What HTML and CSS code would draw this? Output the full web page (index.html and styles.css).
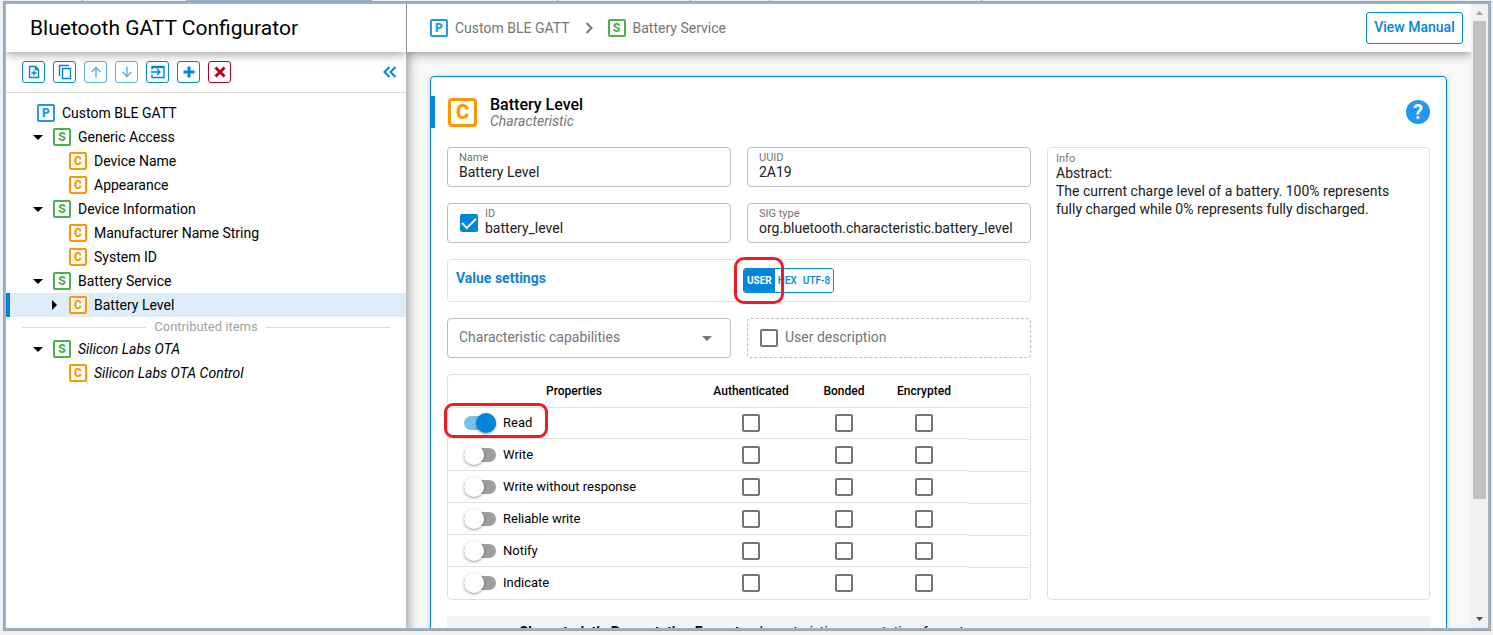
FILE: index.html
```
<!DOCTYPE html>
<html lang="en">
<head>
<meta charset="utf-8">
<title>Bluetooth GATT Configurator</title>
<link rel="stylesheet" href="styles.css">
</head>
<body>
<div class="tabstrip"><span class="tab tab-a"></span><span class="tab tab-b"></span><span class="tab tab-active"></span><span class="tab tab-c"></span><span class="tab tab-d"></span><span class="tab tab-e"></span><span class="tab tab-f"></span><span class="tab tab-rest"></span></div>
<div class="window">
  <aside class="sidebar">
    <header class="bar"><h1 class="app-title">Bluetooth GATT Configurator</h1></header>
    <div class="toolbar">
      <button class="tool" aria-label="Add item"><svg viewBox="0 0 16 16"><path d="M9.500 2.500h-6v11h9v-8zM9.500 2.500v3h3" class="line"/><path d="M8 6.500v5M5.500 9h5" class="line"/></svg></button>
      <button class="tool" aria-label="Duplicate"><svg viewBox="0 0 16 16"><path d="M2.500 12V1.500H12M5.500 4.500h8v10h-8z" class="line"/></svg></button>
      <button class="tool faded" aria-label="Move up"><svg viewBox="0 0 16 16"><path d="M8 13.500v-10M3.500 8L8 3.500 12.500 8" class="line"/></svg></button>
      <button class="tool faded" aria-label="Move down"><svg viewBox="0 0 16 16"><path d="M8 2.500v10M3.500 8L8 12.500 12.500 8" class="line"/></svg></button>
      <button class="tool" aria-label="Import"><svg viewBox="0 0 16 16"><path d="M2 5.500v-3h12v11H2v-3M2 3.500h12M1 8h8.500M7 5l3 3-3 3" class="line"/></svg></button>
      <button class="tool" aria-label="Add"><svg viewBox="0 0 16 16"><path d="M8 2.500v11M2.500 8h11" class="thick"/></svg></button>
      <button class="tool danger" aria-label="Delete"><svg viewBox="0 0 16 16"><path d="M3.500 3.500l9 9M12.500 3.500l-9 9" class="thick"/></svg></button>
      <button class="collapse" aria-label="Collapse panel"><svg viewBox="0 0 14 12"><path d="M6.500 1l-5 5 5 5M12.500 1l-5 5 5 5"/></svg></button>
    </div>
    <ul class="tree">
      <li class="node root"><span class="badge profile">P</span>Custom BLE GATT</li>
      <li class="node service"><span class="caret down"></span><span class="badge serv">S</span>Generic Access</li>
      <li class="node char"><span class="caret"></span><span class="badge chr">C</span>Device Name</li>
      <li class="node char"><span class="caret"></span><span class="badge chr">C</span>Appearance</li>
      <li class="node service"><span class="caret down"></span><span class="badge serv">S</span>Device Information</li>
      <li class="node char"><span class="caret"></span><span class="badge chr">C</span>Manufacturer Name String</li>
      <li class="node char"><span class="caret"></span><span class="badge chr">C</span>System ID</li>
      <li class="node service"><span class="caret down"></span><span class="badge serv">S</span>Battery Service</li>
      <li class="node char selected"><span class="caret right"></span><span class="badge chr">C</span>Battery Level</li>
      <li class="divider">Contributed items</li>
      <li class="node service contributed"><span class="caret down"></span><span class="badge serv">S</span>Silicon Labs OTA</li>
      <li class="node char contributed"><span class="caret"></span><span class="badge chr">C</span>Silicon Labs OTA Control</li>
    </ul>
  </aside>
  <main class="main">
    <header class="bar crumbs">
      <a href="#" class="crumb"><span class="badge profile">P</span>Custom BLE GATT</a>
      <svg class="chevron" viewBox="0 0 8 12"><path d="M1.500 1l5 5-5 5"/></svg>
      <a href="#" class="crumb"><span class="badge serv">S</span>Battery Service</a>
      <button class="manual">View Manual</button>
    </header>
    <div class="content">
      <section class="card">
        <div class="card-head">
          <span class="badge chr large">C</span>
          <div class="heading"><h2>Battery Level</h2><p>Characteristic</p></div>
          <button class="help" aria-label="Help">?</button>
        </div>
        <div class="form">
          <div class="field"><div class="stack"><label for="name">Name</label><input id="name" value="Battery Level"></div></div>
          <div class="field"><div class="stack"><label for="uuid">UUID</label><input id="uuid" value="2A19"></div></div>
          <section class="info"><h3>Info</h3><p>Abstract:<br>The current charge level of a battery. 100% represents fully charged while 0% represents fully discharged.</p></section>
          <div class="field"><input type="checkbox" class="check" aria-label="Use ID" checked><div class="stack"><label for="ident">ID</label><input id="ident" value="battery_level"></div></div>
          <div class="field"><div class="stack"><label for="sig">SIG type</label><input id="sig" value="org.bluetooth.characteristic.battery_level"></div></div>
          <div class="values">
            <h3>Value settings</h3>
            <div class="formats"><div class="segments"><button class="on">USER</button><button>HEX</button><button>UTF-8</button></div><span class="mark mark-user"></span></div>
          </div>
          <div class="field picker"><select aria-label="Characteristic capabilities"><option>Characteristic capabilities</option></select></div>
          <label class="field dashed"><input type="checkbox" class="check">User description</label>
          <div class="props">
            <table>
              <thead><tr><th class="c-prop">Properties</th><th class="c-auth">Authenticated</th><th class="c-bond">Bonded</th><th class="c-enc">Encrypted</th><th></th></tr></thead>
              <tbody>
                <tr><td><label class="toggle"><input type="checkbox" class="switch" checked>Read</label><span class="mark mark-read"></span></td><td><input type="checkbox" class="check" aria-label="Read authenticated"></td><td><input type="checkbox" class="check" aria-label="Read bonded"></td><td class="c-enc"><input type="checkbox" class="check" aria-label="Read encrypted"></td><td></td></tr>
                <tr><td><label class="toggle"><input type="checkbox" class="switch">Write</label></td><td><input type="checkbox" class="check" aria-label="Write authenticated"></td><td><input type="checkbox" class="check" aria-label="Write bonded"></td><td class="c-enc"><input type="checkbox" class="check" aria-label="Write encrypted"></td><td></td></tr>
                <tr><td><label class="toggle"><input type="checkbox" class="switch">Write without response</label></td><td><input type="checkbox" class="check" aria-label="Write without response authenticated"></td><td><input type="checkbox" class="check" aria-label="Write without response bonded"></td><td class="c-enc"><input type="checkbox" class="check" aria-label="Write without response encrypted"></td><td></td></tr>
                <tr><td><label class="toggle"><input type="checkbox" class="switch">Reliable write</label></td><td><input type="checkbox" class="check" aria-label="Reliable write authenticated"></td><td><input type="checkbox" class="check" aria-label="Reliable write bonded"></td><td class="c-enc"><input type="checkbox" class="check" aria-label="Reliable write encrypted"></td><td></td></tr>
                <tr><td><label class="toggle"><input type="checkbox" class="switch">Notify</label></td><td><input type="checkbox" class="check" aria-label="Notify authenticated"></td><td><input type="checkbox" class="check" aria-label="Notify bonded"></td><td class="c-enc"><input type="checkbox" class="check" aria-label="Notify encrypted"></td><td></td></tr>
                <tr><td><label class="toggle"><input type="checkbox" class="switch">Indicate</label></td><td><input type="checkbox" class="check" aria-label="Indicate authenticated"></td><td><input type="checkbox" class="check" aria-label="Indicate bonded"></td><td class="c-enc"><input type="checkbox" class="check" aria-label="Indicate encrypted"></td><td></td></tr>
              </tbody>
            </table>
          </div>
        </div>
        <div class="descriptor"><b>Characteristic Presentation Format</b><i>characteristic_presentation_format</i></div>
      </section>
    </div>
  </main>
  <div class="scrollbar"><svg viewBox="0 0 7 4" class="arrow"><path d="M0 4L3.500 0 7 4z" fill="#a3a3a3"/></svg><div class="track"><div class="thumb"></div></div><svg viewBox="0 0 7 4" class="arrow"><path d="M0 0l3.500 4L7 0z" fill="#505050"/></svg></div>
</div>
</body>
</html>
```
FILE: styles.css
```
* { box-sizing: border-box; }
body {
  margin: 0; height: 100vh; display: flex; flex-direction: column;
  padding: 0 2px 5px 3px; background: #f0f0f0; overflow: hidden;
  font-family: Roboto, sans-serif; font-size: 14px; line-height: 18px; color: #000;
}
h1, h2, h3, p, ul { margin: 0; padding: 0; }
button, input, select { font: inherit; color: inherit; margin: 0; }
button { padding: 0; cursor: pointer; background: #fff; }

.tabstrip { display: flex; height: 2px; flex: none; }
.tab { border-right: 1px solid #a0a0a0; border-bottom: 1px solid #a0a0a0; }
.tab-a { width: 80px; }
.tab-b { width: 104px; }
.tab-active { width: 185px; background: #9db8d9; border-color: #9db8d9; }
.tab-c { width: 186px; }
.tab-d { width: 133px; }
.tab-e { width: 79px; }
.tab-f { width: 212px; }
.tab-rest { flex: 1; border-right: 0; }

.window {
  flex: 1; min-height: 0; display: flex;
  border: 2px solid #99b4d1; box-shadow: 0 0 0 1px #a0a0a0;
  margin: 0 1px; background: #fff; overflow: hidden;
}
.bar {
  flex: none; height: 48px; display: flex; align-items: center; background: #fff;
  box-shadow: 0 2px 10px rgba(0, 0, 0, .4); position: relative; z-index: 2;
}

.sidebar { width: 400px; flex: none; display: flex; flex-direction: column; overflow: hidden; position: relative; z-index: 1; }
.sidebar .bar { padding-left: 24px; }
.app-title { font-size: 21px; line-height: 24px; font-weight: 400; }
.toolbar { height: 41px; flex: none; display: flex; align-items: center; gap: 8px; padding: 0 8px 0 16px; border-bottom: 1px solid #ddd; }
.tool { width: 23px; height: 22px; border: 1px solid #0086d9; border-radius: 3px; color: #0086d9; display: grid; place-items: center; }
.tool svg { width: 16px; height: 16px; }
.line { fill: none; stroke: currentColor; stroke-width: 1.4; }
.thick { fill: none; stroke: currentColor; stroke-width: 3; }
.faded { color: #5ab0e6; border-color: #5ab0e6; }
.danger { color: #c00020; border-color: #c00020; }
.collapse { border: 0; margin-left: auto; width: 16px; height: 16px; display: grid; place-items: center; }
.collapse svg { width: 14px; height: 12px; fill: none; stroke: #0086d9; stroke-width: 2; }

.tree { list-style: none; padding-top: 8px; }
.node { height: 24px; display: flex; align-items: center; gap: 7px; position: relative; }
.root { padding-left: 31px; }
.service { padding-left: 24px; }
.char { padding-left: 40px; }
.contributed { font-style: italic; }
.selected { background: #deeef9; box-shadow: inset 4px 0 #0086d9; }
.caret { width: 16px; display: flex; justify-content: center; }
.down::before { content: ""; border: 5px solid transparent; border-top-color: #000; border-bottom: 0; }
.right::before { content: ""; border: 5px solid transparent; border-left-color: #000; border-right: 0; }
.divider { height: 20px; display: flex; align-items: center; gap: 8px; padding: 0 16px; font-size: 13px; color: #a3a3a3; }
.divider::before, .divider::after { content: ""; flex: 1; border-top: 1px solid #ddd; }

.badge {
  width: 18px; height: 18px; flex: none; border: 2px solid; border-radius: 2px;
  display: flex; align-items: center; justify-content: center; background: #fff;
  font: 900 12px/14px Roboto, sans-serif;
}
.profile { color: #2196f3; }
.serv { color: #4caf50; }
.chr { color: #ff9800; }
.large { width: 29px; height: 29px; border-width: 3px; border-radius: 4px; font-size: 20px; line-height: 23px; }

.main { flex: 1; min-width: 0; display: flex; flex-direction: column; overflow: hidden; background: #f8f8f8; }
.crumbs { padding: 0 8px 0 23px; gap: 15px; color: #757575; border-left: 1px solid #909090; }
.crumb { display: flex; align-items: center; gap: 7px; color: inherit; text-decoration: none; }
.chevron { width: 8px; height: 12px; fill: none; stroke: #757575; stroke-width: 2; }
.manual { margin-left: auto; width: 97px; height: 32px; padding-bottom: 2px; border: 1px solid #0086d9; border-radius: 3px; color: #0086d9; font-weight: 500; }
.content { flex: 1; min-height: 0; padding: 24px 24px 0; overflow: hidden; box-shadow: inset 10px 0 8px -6px rgba(0, 0, 0, .3); }
.card { border: 1px solid #0086d9; border-radius: 4px; background: #fff; box-shadow: 0 1px 5px rgba(0, 0, 0, .2); padding-bottom: 16px; }
.card-head { display: flex; align-items: center; height: 32px; margin: 19px 0; padding: 0 16px 0 13px; border-left: 4px solid #0086d9; }
.heading { flex: 1; margin-left: 13px; }
.heading h2 { font-size: 16px; line-height: 18px; font-weight: 500; }
.heading p { font-size: 14px; line-height: 14px; font-style: italic; color: #757575; }
.help { width: 24px; height: 24px; border: 0; border-radius: 50%; background: #2196f3; color: #fff; font-size: 20px; line-height: 24px; font-weight: 700; }

.form { display: grid; grid-template-columns: 284fr 284fr 383fr; gap: 16px; padding: 0 16px; }
.field { height: 40px; border: 1px solid #bdbdbd; border-radius: 4px; padding: 0 11px 2px; display: flex; align-items: center; gap: 7px; min-width: 0; }
.stack { flex: 1; min-width: 0; display: flex; flex-direction: column; }
.stack label { font-size: 11px; line-height: 12px; color: #757575; }
.stack input { border: 0; padding: 0; width: 100%; height: 16px; background: none; color: #212121; outline: 0; }
.check { appearance: none; width: 18px; height: 18px; flex: none; border: 2px solid #757575; border-radius: 2px; background: #fff; display: grid; place-items: center; }
.check:checked { background: #0086d9; border-color: #0086d9; }
.check:checked::before { content: ""; width: 12px; height: 6px; border: solid #fff; border-width: 0 0 2px 2px; transform: rotate(-45deg) translate(1px, -1px); }
.field .check { margin: 2px 0 0 1px; }
.info { grid-column: 3; grid-row: 1 / span 5; border: 1px solid #e0e0e0; border-radius: 4px; padding: 5px 24px 5px 8px; color: #212121; }
.info h3 { font-size: 11px; line-height: 11px; font-weight: 400; color: #757575; }
.values { grid-column: 1 / span 2; display: grid; grid-template-columns: 1fr 1fr; column-gap: 16px; height: 43px; border: 1px solid #e0e0e0; border-radius: 4px; padding-left: 8px; }
.values h3 { font-size: 14px; font-weight: 700; color: #0f82d4; padding-top: 9px; }
.formats { position: relative; padding-top: 8px; margin-left: -8px; }
.segments { display: inline-flex; height: 25px; border: 1px solid #0086d9; border-radius: 3px; overflow: hidden; }
.segments button { border: 0; padding: 0 3px; font-size: 10px; line-height: 12px; font-weight: 500; color: #0086d9; }
.segments .on { background: #0086d9; color: #fff; font-weight: 700; }
.mark { position: absolute; border: 3px solid #ed1c24; border-radius: 10px; pointer-events: none; }
.mark-user { left: -9px; top: -3px; width: 50px; height: 47px; }
.mark-read { left: -4px; top: -5px; width: 104px; height: 35px; border-radius: 9px; z-index: 1; }
.picker { padding: 0; position: relative; color: #757575; }
.picker select { appearance: none; width: 100%; height: 38px; border: 0; padding: 0 11px 2px; background: none; }
.picker::after { content: ""; position: absolute; right: 18px; top: 17px; border: 5px solid transparent; border-top-color: #757575; border-bottom: 0; }
.dashed { border-style: dashed; color: #757575; }

.props { grid-column: 1 / span 2; border: 1px solid #e0e0e0; border-radius: 4px; padding-right: 1px; }
table { width: 100%; table-layout: fixed; border-collapse: separate; border-spacing: 0; font-size: 13px; }
th { height: 33px; padding: 0; font-size: 12px; font-weight: 500; border-bottom: 1px solid #e0e0e0; }
.c-prop { width: 252px; }
.c-auth { width: 102px; }
.c-bond { width: 84px; }
th.c-enc { width: 82px; }
td { height: 32px; padding: 0 0 2px; position: relative; border-bottom: 1px solid transparent; box-shadow: inset 0 -1px #e0e0e0; }
th.c-enc, td.c-enc { padding-right: 6px; }
td:last-child { border-color: #e0e0e0; box-shadow: none; }
tr:last-child td { box-shadow: none; border-bottom: 0; height: 31px; padding-bottom: 1px; }
td .check { margin: 0 auto; }
.toggle { display: flex; align-items: center; gap: 7px; padding-left: 16px; }
.switch { appearance: none; width: 32px; height: 14px; border-radius: 7px; background: #9e9e9e; display: flex; align-items: center; flex: none; }
.switch::before { content: ""; width: 20px; height: 20px; flex: none; border-radius: 50%; background: #fff; box-shadow: 0 1px 3px rgba(0, 0, 0, .4); }
.switch:checked { background: #79bfec; justify-content: flex-end; }
.switch:checked::before { background: #0086d9; }
.descriptor { display: flex; gap: 12px; margin: 16px 16px 0; height: 56px; padding: 7px 72px; background: #f4f4f4; border-radius: 4px; }

.scrollbar { width: 17px; flex: none; background: #f1f1f1; display: flex; flex-direction: column; align-items: center; padding: 7px 0; gap: 6px; }
.arrow { width: 7px; height: 4px; flex: none; }
.track { flex: 1; width: 13px; }
.thumb { height: 81%; background: #c1c1c1; }
```
